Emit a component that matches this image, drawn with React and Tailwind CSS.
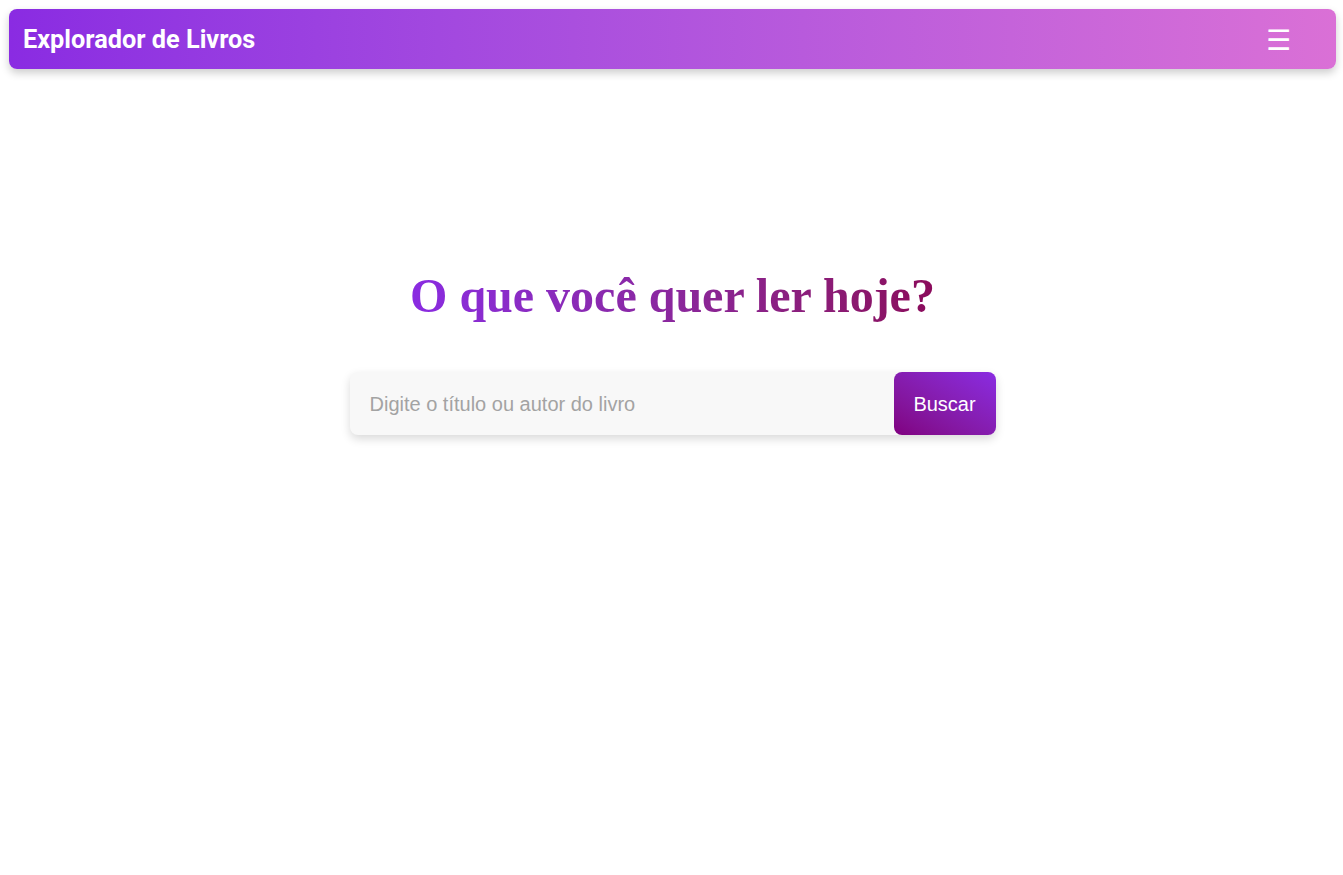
import React, { useState } from 'react';

const App = () => {
  const [query, setQuery] = useState('');

  return (
    <div className="min-h-screen bg-white" style={{ fontFamily: 'Roboto, "Liberation Sans", sans-serif' }}>
      {/* Top bar */}
      <div className="pt-[9px] pl-[9px] pr-[7px]">
        <header className="h-[60px] rounded-lg bg-gradient-to-r from-[#8a2be2] to-[#da70d6] shadow-[0_4px_8px_rgba(0,0,0,0.2)] flex items-center justify-between pl-[14px] pr-[45px]">
          <h1 className="text-white text-[25.3px] font-bold font-['Roboto',sans-serif] mt-[2px]">Explorador de Livros</h1>
          <button className="text-white text-[28px] leading-none font-['DejaVu_Sans',sans-serif] mt-[4px]">☰</button>
        </header>
      </div>

      {/* Hero */}
      <main className="flex flex-col items-center pt-[199px]">
        <h2 className="ml-[2px] text-[48px] leading-[1.15] font-bold font-['Liberation_Serif',serif] bg-gradient-to-r from-[#8a2be2] to-[#8b0a5b] bg-clip-text text-transparent">
          O que você quer ler hoje?
        </h2>

        <div className="mt-[49px] ml-[2px] w-[646px] h-[63px] flex rounded-lg shadow-[0_4px_10px_rgba(0,0,0,0.15)] bg-[#f8f8f8]">
          <input
            value={query}
            onChange={(e) => setQuery(e.target.value)}
            placeholder="Digite o título ou autor do livro"
            className="flex-1 bg-transparent outline-none px-5 text-[20px] text-gray-700 placeholder:text-[#a3a3a3] font-['Liberation_Sans',sans-serif]"
          />
          <button className="w-[102px] h-full rounded-lg bg-gradient-to-tr from-[#800080] to-[#8a2be2] text-white text-[20px] font-['Liberation_Sans',sans-serif]">
            Buscar
          </button>
        </div>
      </main>
    </div>
  );
};

export default App;
